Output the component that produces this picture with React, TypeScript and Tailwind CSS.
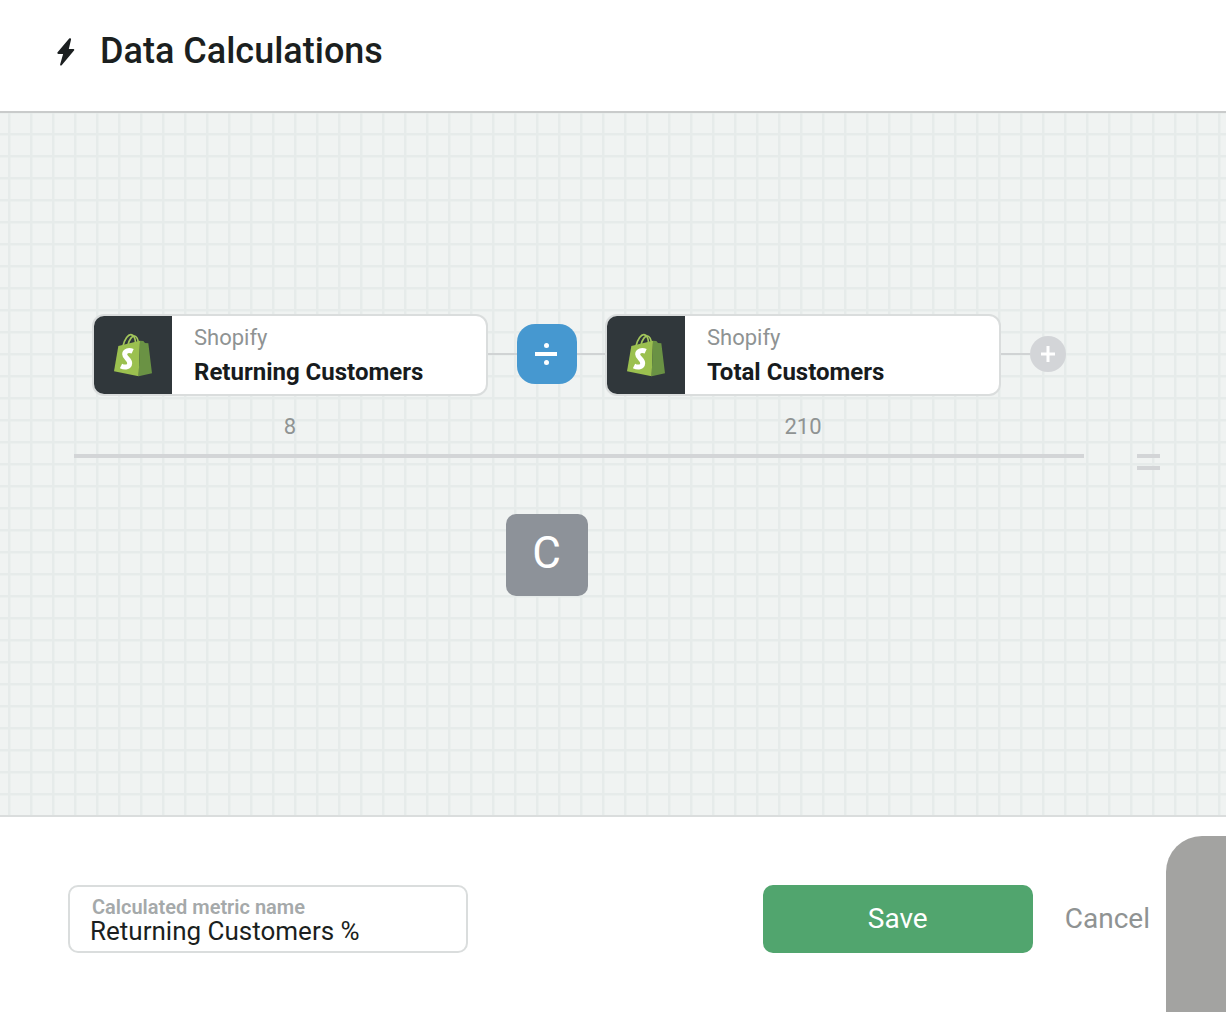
import { useState } from "react";

function BoltIcon() {
  return (
    <svg viewBox="0 0 18 30" className="h-[30px] w-[18px]" fill="#1b1f20" aria-hidden="true">
      <path d="M12.2 1.6.6 15.2c-.7.9-.3 1.8.8 1.8h4.7L3.2 27.2c-.4 1.5.9 1.8 1.7.8L17 13.6c.6-.9.2-1.7-.8-1.7h-4.4l2.2-9.2c.3-1.4-.9-2-1.8-1.1z" />
    </svg>
  );
}

function ShopifyLogo() {
  return (
    <svg viewBox="0 0 114 132" className="h-11 w-[38px]" aria-hidden="true">
      <g fill="none" stroke="#a3c65c" strokeWidth="5">
        <path d="M27 39C32 18 43 4 51 5c8 1 13 12 14 26" />
        <path d="M42 36C46 18 55 8 62 9c5 1 9 8 11 18" />
      </g>
      <path d="M13 39 78 23 74 130 0 115z" fill="#9bc04f" />
      <path d="M78 23 88 24 93 30 103 31 114 121 74 130z" fill="#6a9244" />
      <path
        d="M56 55C45 50 32 53 32 64c0 11 16 15 15 27-1 12-14 14-26 8"
        fill="none"
        stroke="#ffffff"
        strokeWidth="15"
      />
    </svg>
  );
}

function MetricCard({ source, name }: { source: string; name: string }) {
  return (
    <article className="flex h-[82px] min-w-0 overflow-hidden rounded-xl border-2 border-[#dadddd] bg-white">
      <div className="flex w-[78px] shrink-0 items-center justify-center bg-[#30373b]">
        <ShopifyLogo />
      </div>
      <div className="flex min-w-0 flex-col justify-center pl-[22px]">
        <span className="truncate text-[22px] leading-[34px] text-[#8f9393]">{source}</span>
        <h2 className="truncate text-[24px] leading-[34px] font-bold text-[#171b1d]">{name}</h2>
      </div>
    </article>
  );
}

function Connector() {
  return <span className="h-[2px] flex-1 bg-[#d0d3d4]" />;
}

export default function App() {
  const [metricName, setMetricName] = useState("Returning Customers %");

  return (
    <div className="relative flex min-h-screen flex-col overflow-hidden bg-white font-['Roboto',sans-serif]">
      <header className="flex items-center gap-[25px] border-b-2 border-[#c9cbcb] px-[57px] pt-7 pb-9">
        <BoltIcon />
        <h1 className="text-[36px] leading-[47px] font-medium text-[#1b1f20]">Data Calculations</h1>
      </header>

      <main className="flex flex-1 items-start gap-[53px] bg-[#f0f3f2] bg-[linear-gradient(to_right,#e6ebea_2px,#e6ebea00_3px),linear-gradient(to_bottom,#e6ebea_2px,#e6ebea00_3px)] bg-size-[22px_22px] bg-position-[8px_20px] pt-[201px] pr-[66px] pl-[74px]">
        <section className="flex-1" aria-label="Formula">
          <div className="grid grid-cols-[1fr_117px_1fr_65px] items-center px-[18px]">
            <MetricCard source="Shopify" name="Returning Customers" />
            <div className="flex items-center pb-[2px]">
              <Connector />
              <button
                type="button"
                aria-label="Divide"
                className="flex size-[60px] items-center justify-center rounded-[18px] bg-[#4698d0]"
              >
                <svg viewBox="0 0 24 24" className="size-6" fill="#ffffff" aria-hidden="true">
                  <rect x="0" y="10" width="22" height="4" />
                  <circle cx="11.5" cy="3.5" r="2.5" />
                  <circle cx="11.5" cy="20.5" r="2.5" />
                </svg>
              </button>
              <Connector />
            </div>
            <MetricCard source="Shopify" name="Total Customers" />
            <div className="flex items-center pb-[2px]">
              <Connector />
              <button
                type="button"
                aria-label="Add metric"
                className="flex size-9 items-center justify-center rounded-full bg-[#d3d5d8]"
              >
                <svg viewBox="0 0 14 16" className="h-4 w-[14px]" fill="#ffffff" aria-hidden="true">
                  <path d="M5.5 0h3v6.5H14v3H8.5V16h-3V9.5H0v-3h5.5z" />
                </svg>
              </button>
            </div>
            <output className="pt-[17px] text-center text-[22px] leading-7 text-[#8f9393]">8</output>
            <output className="col-start-3 pt-[17px] text-center text-[22px] leading-7 text-[#8f9393]">210</output>
          </div>
          <div className="mt-[13px] h-1 bg-[#d3d5d7]" />
          <div className="mt-14 flex justify-center pr-[83px] pl-[18px]">
            <button
              type="button"
              className="size-[82px] rounded-[10px] bg-[#8d9299] pb-1 text-[44px] leading-none text-white"
            >
              C
            </button>
          </div>
        </section>
        <div className="mt-[140px] flex w-[23px] flex-col gap-2" role="img" aria-label="Equals">
          <span className="h-1 bg-[#d3d5d7]" />
          <span className="h-1 bg-[#d3d5d7]" />
        </div>
      </main>

      <footer className="flex items-center border-t-2 border-[#dadddd] bg-white pt-[68px] pr-[76px] pb-[59px] pl-[68px]">
        <div className="flex h-[68px] w-[400px] flex-col justify-end rounded-[10px] border-2 border-[#dadddd] px-5 pb-[6px]">
          <label htmlFor="metric-name" className="pl-[2px] text-[20px] leading-5 font-semibold text-[#a5a9aa]">
            Calculated metric name
          </label>
          <input
            id="metric-name"
            type="text"
            value={metricName}
            onChange={(event) => setMetricName(event.target.value)}
            className="h-7 w-full text-[26px] leading-7 text-[#1b1f20] outline-none"
          />
        </div>
        <button
          type="button"
          className="ml-auto h-[68px] w-[270px] rounded-[10px] bg-[#51a56e] text-[28px] text-white"
        >
          Save
        </button>
        <button type="button" className="ml-8 text-[28px] text-[#8f9393]">
          Cancel
        </button>
      </footer>

      <div className="absolute right-0 bottom-0 h-[176px] w-[60px] rounded-tl-[36px] bg-[#a3a3a1]" />
    </div>
  );
}
